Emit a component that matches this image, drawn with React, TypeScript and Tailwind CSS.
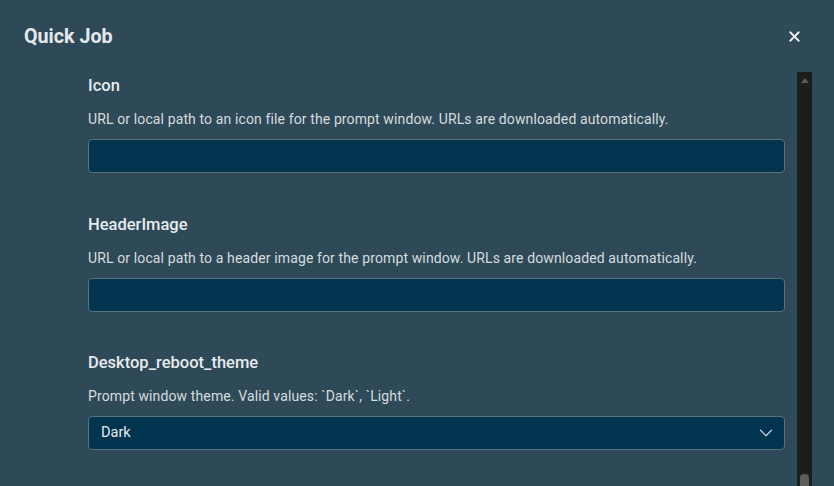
import { X, ChevronDown } from 'lucide-react';

const fields = [
  { label: 'Icon', desc: 'URL or local path to an icon file for the prompt window. URLs are downloaded automatically.', value: '', select: false },
  { label: 'HeaderImage', desc: 'URL or local path to a header image for the prompt window. URLs are downloaded automatically.', value: '', select: false },
  { label: 'Desktop_reboot_theme', desc: 'Prompt window theme. Valid values: `Dark`, `Light`.', value: 'Dark', select: true },
];

export default function App() {
  return (
    <div className="w-[834px] h-[486px] overflow-hidden bg-[#2e4a58] flex flex-col" style={{ fontFamily: 'Roboto, "Noto Sans", sans-serif' }}>
      <div className="h-[72px] shrink-0 flex items-center justify-between pl-6 pr-[31px] pt-[1px]">
        <h2 className="text-[19.7px] font-bold text-[#e6e9eb]">Quick Job</h2>
        <X className="w-[17px] h-[17px] text-[#f0f2f3]" strokeWidth={2.5} />
      </div>
      <div className="flex flex-1 min-h-0">
        <div className="flex-1 pl-[88px] pr-3 pt-[2px]">
          {fields.map(f => (
            <div key={f.label} className="mb-[39.5px]">
              <div className="text-[16.5px] leading-6 font-medium text-[#e8ebed]">{f.label}</div>
              <div className="mt-[11px] text-[14px] leading-5 tracking-[0.12px] text-[#d6dcdf]">{f.desc}</div>
              <div className="mt-[10px] h-[34px] rounded-[4px] border border-[#5c717c] bg-[#01344f] flex items-center justify-between pl-3 pr-[7px]">
                <span className="text-[14.5px] text-[#e6eaec]">{f.value}</span>
                {f.select && <ChevronDown className="w-[22px] h-[22px] text-[#c9d6de]" strokeWidth={1.3} />}
              </div>
            </div>
          ))}
        </div>
        <div className="w-[15px] shrink-0 mr-[22px] bg-[#1c1d1d] flex flex-col items-center justify-between">
          <div className="mt-[6px] w-0 h-0 border-l-[4px] border-r-[4px] border-b-[5px] border-l-transparent border-r-transparent border-b-[#5a5a5a]" />
          <div className="w-[9px] h-[12px] rounded-t-[4px] bg-[#5d5d5d]" />
        </div>
      </div>
    </div>
  );
}
